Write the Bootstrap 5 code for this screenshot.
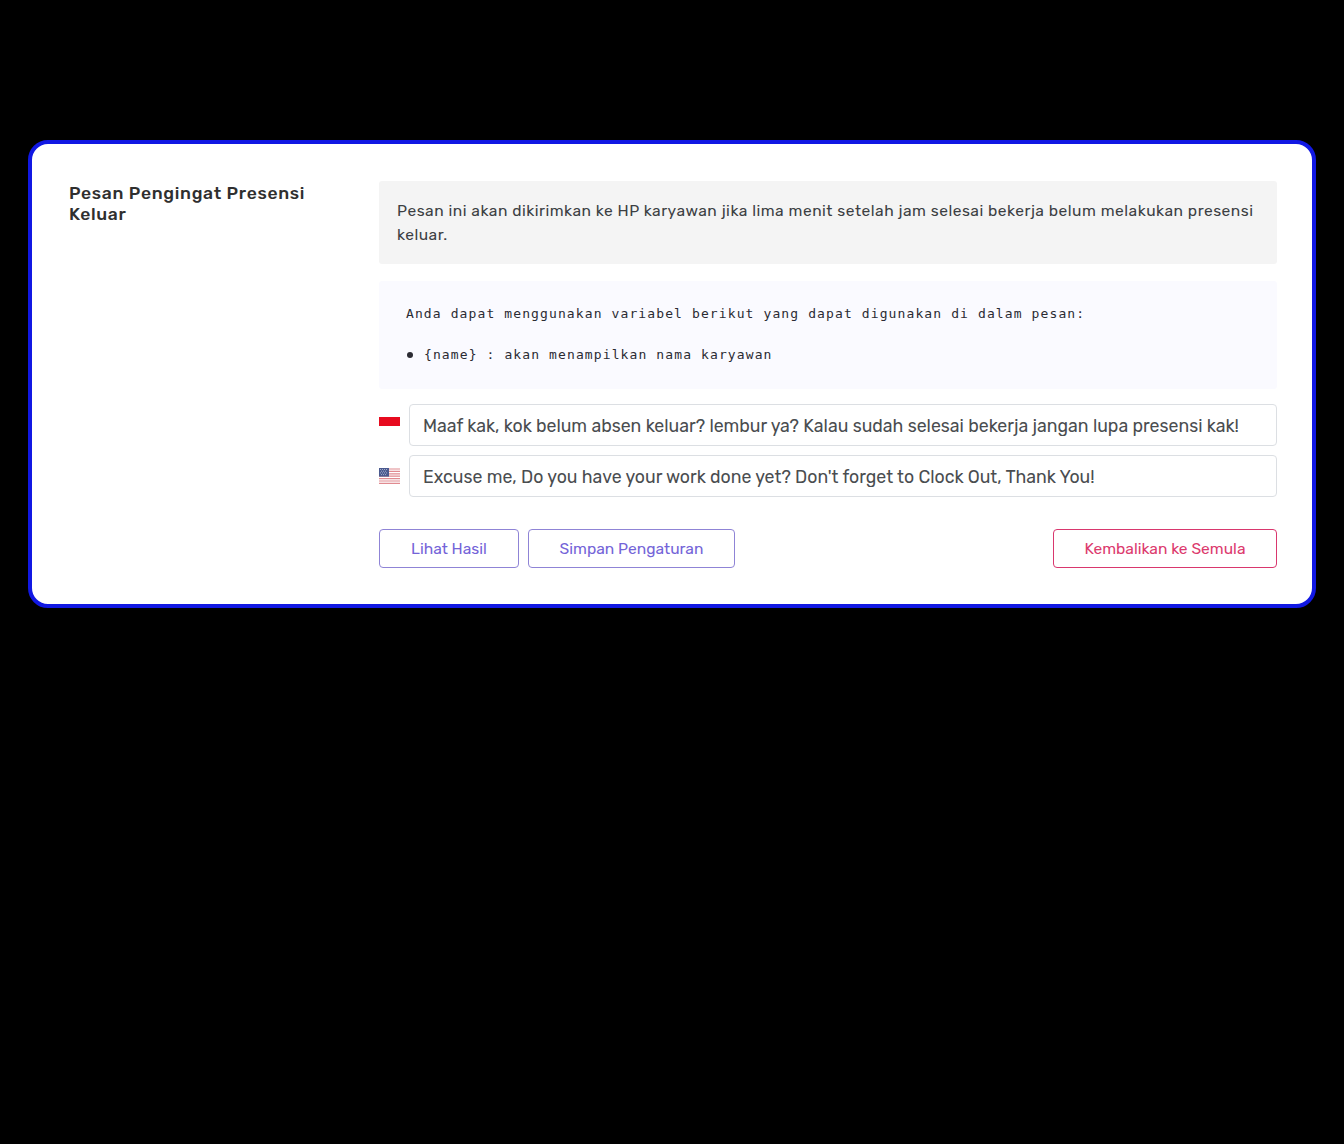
<!DOCTYPE html>
<html lang="en">

<head>
    <meta charset="UTF-8">
    <meta name="viewport" content="width=device-width, initial-scale=1.0">
    <title>Pesan Pengingat Presensi Keluar</title>
    <link href="https://cdn.jsdelivr.net/npm/bootstrap@5.3.2/dist/css/bootstrap.min.css" rel="stylesheet">
    <style>
        body {
            background-color: #000;
            font-family: Rubik, Inter, "Liberation Sans", sans-serif;
            padding: 140px 28px 0;
        }

        .setting-card {
            background-color: #fff;
            border: 4px solid #1118e3;
            border-radius: 20px;
            padding: 37px 35px 36px 37px;
        }

        .setting-side {
            flex: 0 0 310px;
            padding-right: 30px;
        }

        .setting-title {
            color: #2f2f2f;
            font-family: Rubik, Roboto, Inter, sans-serif;
            font-size: 17.5px;
            font-weight: 500;
            letter-spacing: .68px;
            line-height: 21px;
            margin: 0;
            padding-top: 1.5px;
        }

        .info-box {
            background-color: #f4f4f4;
            border-radius: 3px;
            color: #3c3f43;
            font-size: 15.6px;
            letter-spacing: .5px;
            line-height: 24px;
            padding: 17.5px 18px;
            height: 83px;
        }

        .var-box {
            background-color: #fafaff;
            border-radius: 3px;
            color: #2b2b33;
            font-family: "DejaVu Sans Mono", "Liberation Mono", monospace;
            font-size: 13px;
            letter-spacing: 1.11px;
            line-height: 20px;
            height: 108px;
            margin-top: 17px;
            padding: 23px 27px;
        }

        .var-box p {
            margin: 0 0 21px;
        }

        .var-item {
            padding-left: 18px;
            position: relative;
        }

        .var-item::before {
            background-color: #2b2b33;
            border-radius: 50%;
            content: "";
            height: 6px;
            left: 1px;
            position: absolute;
            top: 7px;
            width: 6px;
        }

        .flag-icon {
            flex: 0 0 21px;
            height: 16px;
            margin-right: 9px;
        }

        .flag-id {
            margin-top: 10px;
        }

        .flag-us {
            margin-top: 13px;
        }

        .lang-row {
            margin-top: 15px;
        }

        .lang-input.form-control {
            border-color: #dcdfe3;
            border-radius: 4px;
            color: #4a4d50;
            font-size: 17.7px;
            height: 42px;
            padding: 0 13px;
        }

        .lang-row + .lang-row {
            margin-top: 9px;
        }

        .act-row {
            gap: 9px;
            margin-top: 32px;
        }

        .act-btn {
            background: #fff;
            border-radius: 4px;
            font-size: 15.6px;
            height: 39px;
            padding: 0;
        }

        .act-view { width: 140px; }
        .act-save { width: 207px; }
        .act-reset { width: 224px; }

        .act-view, .act-save {
            border: 1px solid #8f84d6;
            color: #7464d8;
        }

        .act-reset {
            border: 1px solid #d9376e;
            color: #dc3a6e;
        }
    </style>
</head>

<body>
    <div class="setting-card d-flex">
        <div class="setting-side">
            <h2 class="setting-title">Pesan Pengingat Presensi Keluar</h2>
        </div>

        <div class="flex-grow-1">
            <div class="info-box">Pesan ini akan dikirimkan ke HP karyawan jika lima menit setelah jam selesai bekerja belum melakukan presensi keluar.</div>

            <div class="var-box">
                <p>Anda dapat menggunakan variabel berikut yang dapat digunakan di dalam pesan:</p>
                <div class="var-item">{name} : akan menampilkan nama karyawan</div>
            </div>

            <div class="d-flex align-items-start lang-row">
                <svg class="flag-icon flag-id" viewBox="0 0 21 16" aria-label="Indonesia">
                    <rect y="3" width="21" height="9" fill="#e70b1f" />
                </svg>
                <input type="text" class="form-control lang-input" value="Maaf kak, kok belum absen keluar? lembur ya? Kalau sudah selesai bekerja jangan lupa presensi kak!">
            </div>

            <div class="d-flex align-items-start lang-row">
                <svg class="flag-icon flag-us" viewBox="0 0 21 16" aria-label="United States">
                    <rect y="0" width="21" height="16" fill="#fff" />
                    <path d="M0 1h21M0 3.4h21M0 5.8h21M0 8.2h21M0 10.6h21M0 13h21M0 15.4h21" stroke="#e08a90" stroke-width="1.2" />
                    <rect width="10" height="8.6" fill="#4a5a8f" />
                    <path d="M1 1.5h8M2 3.2h6M1 4.9h8M2 6.6h6" stroke="#b9c0d8" stroke-width=".8" stroke-dasharray="1 1" />
                </svg>
                <input type="text" class="form-control lang-input" value="Excuse me, Do you have your work done yet? Don't forget to Clock Out, Thank You!">
            </div>

            <div class="d-flex act-row">
                <button type="button" class="btn act-btn act-view">Lihat Hasil</button>
                <button type="button" class="btn act-btn act-save">Simpan Pengaturan</button>
                <button type="button" class="btn act-btn act-reset ms-auto">Kembalikan ke Semula</button>
            </div>
        </div>
    </div>

    <script src="https://cdn.jsdelivr.net/npm/bootstrap@5.3.2/dist/js/bootstrap.bundle.min.js"></script>
</body>

</html>
